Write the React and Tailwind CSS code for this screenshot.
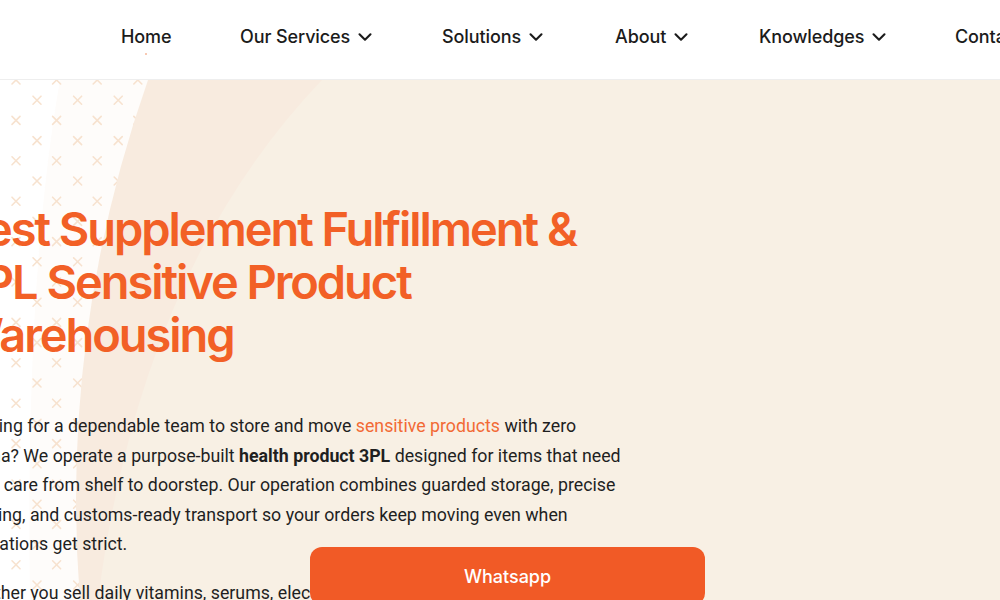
import React from "react";
import { ChevronDown } from "lucide-react";

const NAV = [
  { label: "Home", w: "w-[119px]", chev: false },
  { label: "Our Services", w: "w-[202px]", chev: true },
  { label: "Solutions", w: "w-[173px]", chev: true },
  { label: "About", w: "w-[144px]", chev: true },
  { label: "Knowledges", w: "w-[196px]", chev: true },
  { label: "Contact", w: "w-[150px]", chev: false },
];

function Background() {
  const crosses = [];
  for (let r = 0; r < 27; r++) {
    const y = r * 20.2;
    const x0 = r % 2 === 0 ? 16 : 37;
    for (let k = 0; k < 4; k++) {
      const x = x0 + k * 40.6;
      crosses.push(
        <g key={`${r}-${k}`} stroke="#f7e2cf" strokeWidth="1.6" strokeLinecap="round">
          <line x1={x - 4} y1={y - 4} x2={x + 4} y2={y + 4} />
          <line x1={x + 4} y1={y - 4} x2={x - 4} y2={y + 4} />
        </g>
      );
    }
  }
  return (
    <svg
      className="absolute inset-0 h-full w-full"
      viewBox="0 0 1000 520"
      preserveAspectRatio="none"
    >
      <rect x="0" y="0" width="1000" height="520" fill="#ffffff" />
      <path d="M60 0 Q 25 200 30 520 L 200 520 L 200 0 Z" fill="#fefcfa" />
      {crosses}
      <path d="M148 0 A1261 1261 0 0 0 80 520 L1000 520 L1000 0 Z" fill="#f8ebdf" />
      <path d="M322 0 Q 140 190 98 520 L1000 520 L1000 0 Z" fill="#f8f0e4" />
    </svg>
  );
}

export default function App() {
  return (
    <div className="relative h-[600px] w-[1000px] overflow-hidden bg-white">
      <header className="relative z-10 flex h-[80px] items-center border-b border-[#eeeeee] bg-white pb-[5px] pl-[121px]">
        <nav className="flex items-center" style={{ fontFamily: "Inter, 'Liberation Sans', sans-serif" }}>
          {NAV.map((n) => (
            <div key={n.label} className={`relative flex shrink-0 items-center ${n.w}`}>
              <span className="text-[18px] font-medium leading-none tracking-[-0.1px] text-[#1b1b1b]">
                {n.label}
              </span>
              {n.chev && (
                <ChevronDown size={22} strokeWidth={2.3} className="ml-[4px] text-[#1b1b1b]" />
              )}
              {n.label === "Home" && (
                <span className="absolute left-[24px] top-[25px] h-[2px] w-[2px] rounded-full bg-[#f6b79a]" />
              )}
            </div>
          ))}
        </nav>
      </header>

      <section className="relative h-[520px]">
        <Background />
        <div className="relative pt-[122px]">
          <h1
            className="-ml-[44px] text-[47px] font-semibold leading-[53px] tracking-[-2.05px] text-[#f26026]"
            style={{ fontFamily: "Inter, 'Liberation Sans', sans-serif" }}
          >
            Best Supplement Fulfillment &amp;
            <br />
            3PL Sensitive Product
            <br />
            Warehousing
          </h1>
          <div
            className="-ml-[40px] mt-[51px] w-[720px] text-[17.75px] leading-[29.6px] text-[#1f1f1f]"
            style={{ fontFamily: "Roboto, 'Liberation Sans', sans-serif" }}
          >
            <p>
              Looking for a dependable team to store and move{" "}
              <span className="text-[#f26a35]">sensitive products</span> with zero
              <br />
              drama? We operate a purpose-built <b className="font-bold">health product 3PL</b> designed for items that need
              <br />
              extra care from shelf to doorstep. Our operation combines guarded storage, precise
              <br />
              packing, and customs-ready transport so your orders keep moving even when
              <br />
              regulations get strict.
            </p>
            <p className="mt-[19px]">
              Whether you sell daily vitamins, serums, electrolytes or topical treatments, we handle them all.
            </p>
          </div>
        </div>
      </section>

      <button
        className="absolute left-[310px] top-[547px] flex h-[58px] w-[395px] items-center justify-center rounded-[12px] bg-[#f15a26] text-[18px] font-medium text-white"
        style={{ fontFamily: "Inter, 'Liberation Sans', sans-serif" }}
      >
        Whatsapp
      </button>
    </div>
  );
}
